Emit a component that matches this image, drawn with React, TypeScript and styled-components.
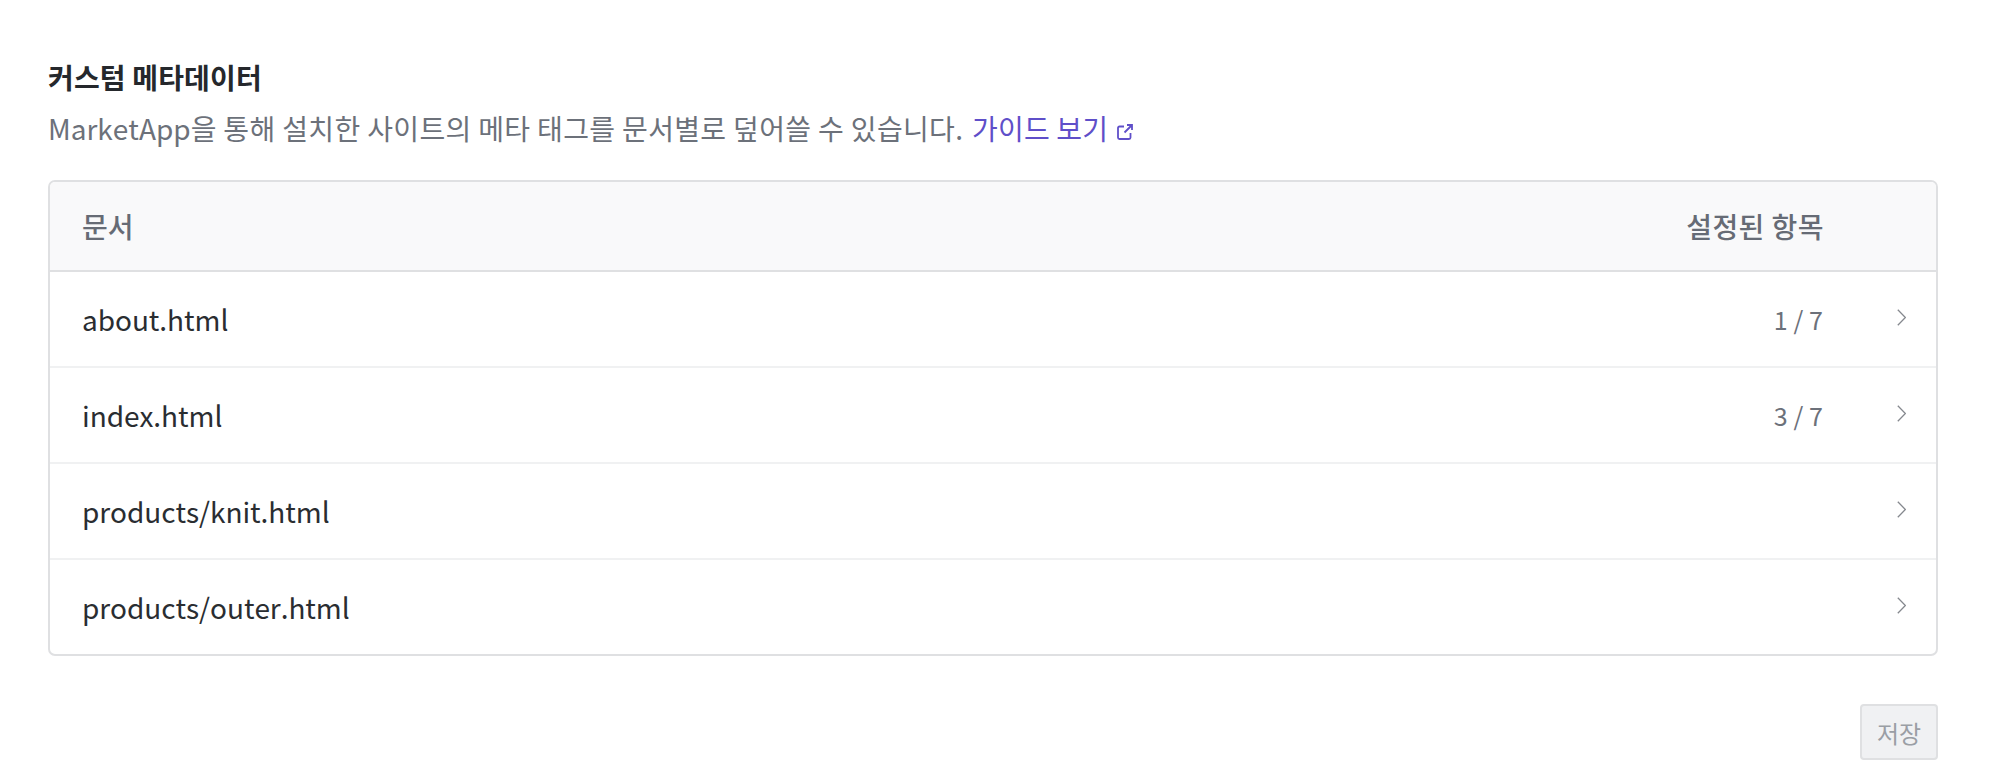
import React from 'react';
import styled, { createGlobalStyle } from 'styled-components';

const GlobalStyle = createGlobalStyle`
  html, body {
    margin: 0;
    padding: 0;
    background: #fff;
    font-family: "Noto Sans CJK KR", "Noto Sans", sans-serif;
    font-kerning: none;
  }
`;

const Page = styled.div`
  box-sizing: border-box;
  width: 2000px;
  height: 760px;
  overflow: hidden;
  padding: 54px 62px 0 48px;
`;

const Title = styled.h2`
  margin: 0;
  font-size: 28px;
  line-height: 46px;
  font-weight: 700;
  letter-spacing: 0.15px;
  color: #25282c;
`;

const Description = styled.p`
  margin: 8px 0 0;
  font-size: 28px;
  line-height: 40px;
  font-weight: 400;
  letter-spacing: 0.35px;
  color: #6c717a;
`;

const Brand = styled.span`
  letter-spacing: 0;
`;

const GuideLink = styled.a`
  margin-left: 2px;
  letter-spacing: 0.2px;
  color: #5f4fc9;
  text-decoration: none;
`;

const LinkIcon = styled.svg`
  width: 16px;
  height: 16px;
  margin-left: 9px;
  vertical-align: 0;
`;

const Card = styled.div`
  margin-top: 32px;
  border: 2px solid #dfe0e2;
  border-radius: 7px;
  overflow: hidden;
`;

const HeaderRow = styled.div`
  display: flex;
  align-items: center;
  height: 88px;
  padding-left: 32px;
  background: #f9f9fa;
  border-bottom: 2px solid #dfe0e2;
  font-size: 28px;
  font-weight: 500;
  color: #666b75;
`;

const Row = styled.div`
  display: flex;
  align-items: center;
  height: 94px;
  padding-left: 32px;
  font-size: 28px;
  letter-spacing: -0.05px;
  color: #2a2d31;
  & + & {
    border-top: 2px solid #f0f1f2;
  }
`;

const Name = styled.div`
  flex: 1;
`;

const HeaderLabel = styled.div`
  margin-right: 112px;
  letter-spacing: 0.45px;
`;

const Count = styled.div`
  font-size: 25px;
  letter-spacing: 0.1px;
  color: #6c717a;
`;

const Chevron = styled.svg`
  flex: none;
  width: 9px;
  height: 17px;
  margin: -4px 30px 0 74px;
`;

const Footer = styled.div`
  display: flex;
  justify-content: flex-end;
  margin-top: 48px;
`;

const SaveButton = styled.button`
  width: 78px;
  height: 56px;
  padding: 0;
  border: 2px solid #dfe0e2;
  border-radius: 4px;
  background: #f0f1f3;
  font-family: inherit;
  font-size: 24px;
  color: #9a9ea5;
`;

const rows = [
  { name: 'about.html', count: '1 / 7' },
  { name: 'index.html', count: '3 / 7' },
  { name: 'products/knit.html', count: '' },
  { name: 'products/outer.html', count: '' },
];

export default function App() {
  return (
    <Page>
      <GlobalStyle />
      <Title>커스텀 메타데이터</Title>
      <Description>
        <Brand>MarketApp</Brand>을 통해 설치한 사이트의 메타 태그를 문서별로 덮어쓸 수 있습니다.{' '}
        <GuideLink href="#">
          가이드 보기
          <LinkIcon viewBox="0 0 16 16" fill="none" stroke="currentColor" strokeWidth="1.8">
            <path d="M7 2.5H2.5A1.5 1.5 0 0 0 1 4v9.5A1.5 1.5 0 0 0 2.500 15H12a1.500 1.500 0 0 0 1.500-1.500V9" />
            <path d="M10 1h5v5M15 1L7.500 8.500" />
          </LinkIcon>
        </GuideLink>
      </Description>
      <Card>
        <HeaderRow>
          <Name>문서</Name>
          <HeaderLabel>설정된 항목</HeaderLabel>
        </HeaderRow>
        {rows.map((row) => (
          <Row key={row.name}>
            <Name>{row.name}</Name>
            <Count>{row.count}</Count>
            <Chevron viewBox="0 0 9 17" fill="none" stroke="#85888e" strokeWidth="1.3">
              <path d="M.8 .8l7.600 7.700L.8 16.200" />
            </Chevron>
          </Row>
        ))}
      </Card>
      <Footer>
        <SaveButton disabled>저장</SaveButton>
      </Footer>
    </Page>
  );
}
